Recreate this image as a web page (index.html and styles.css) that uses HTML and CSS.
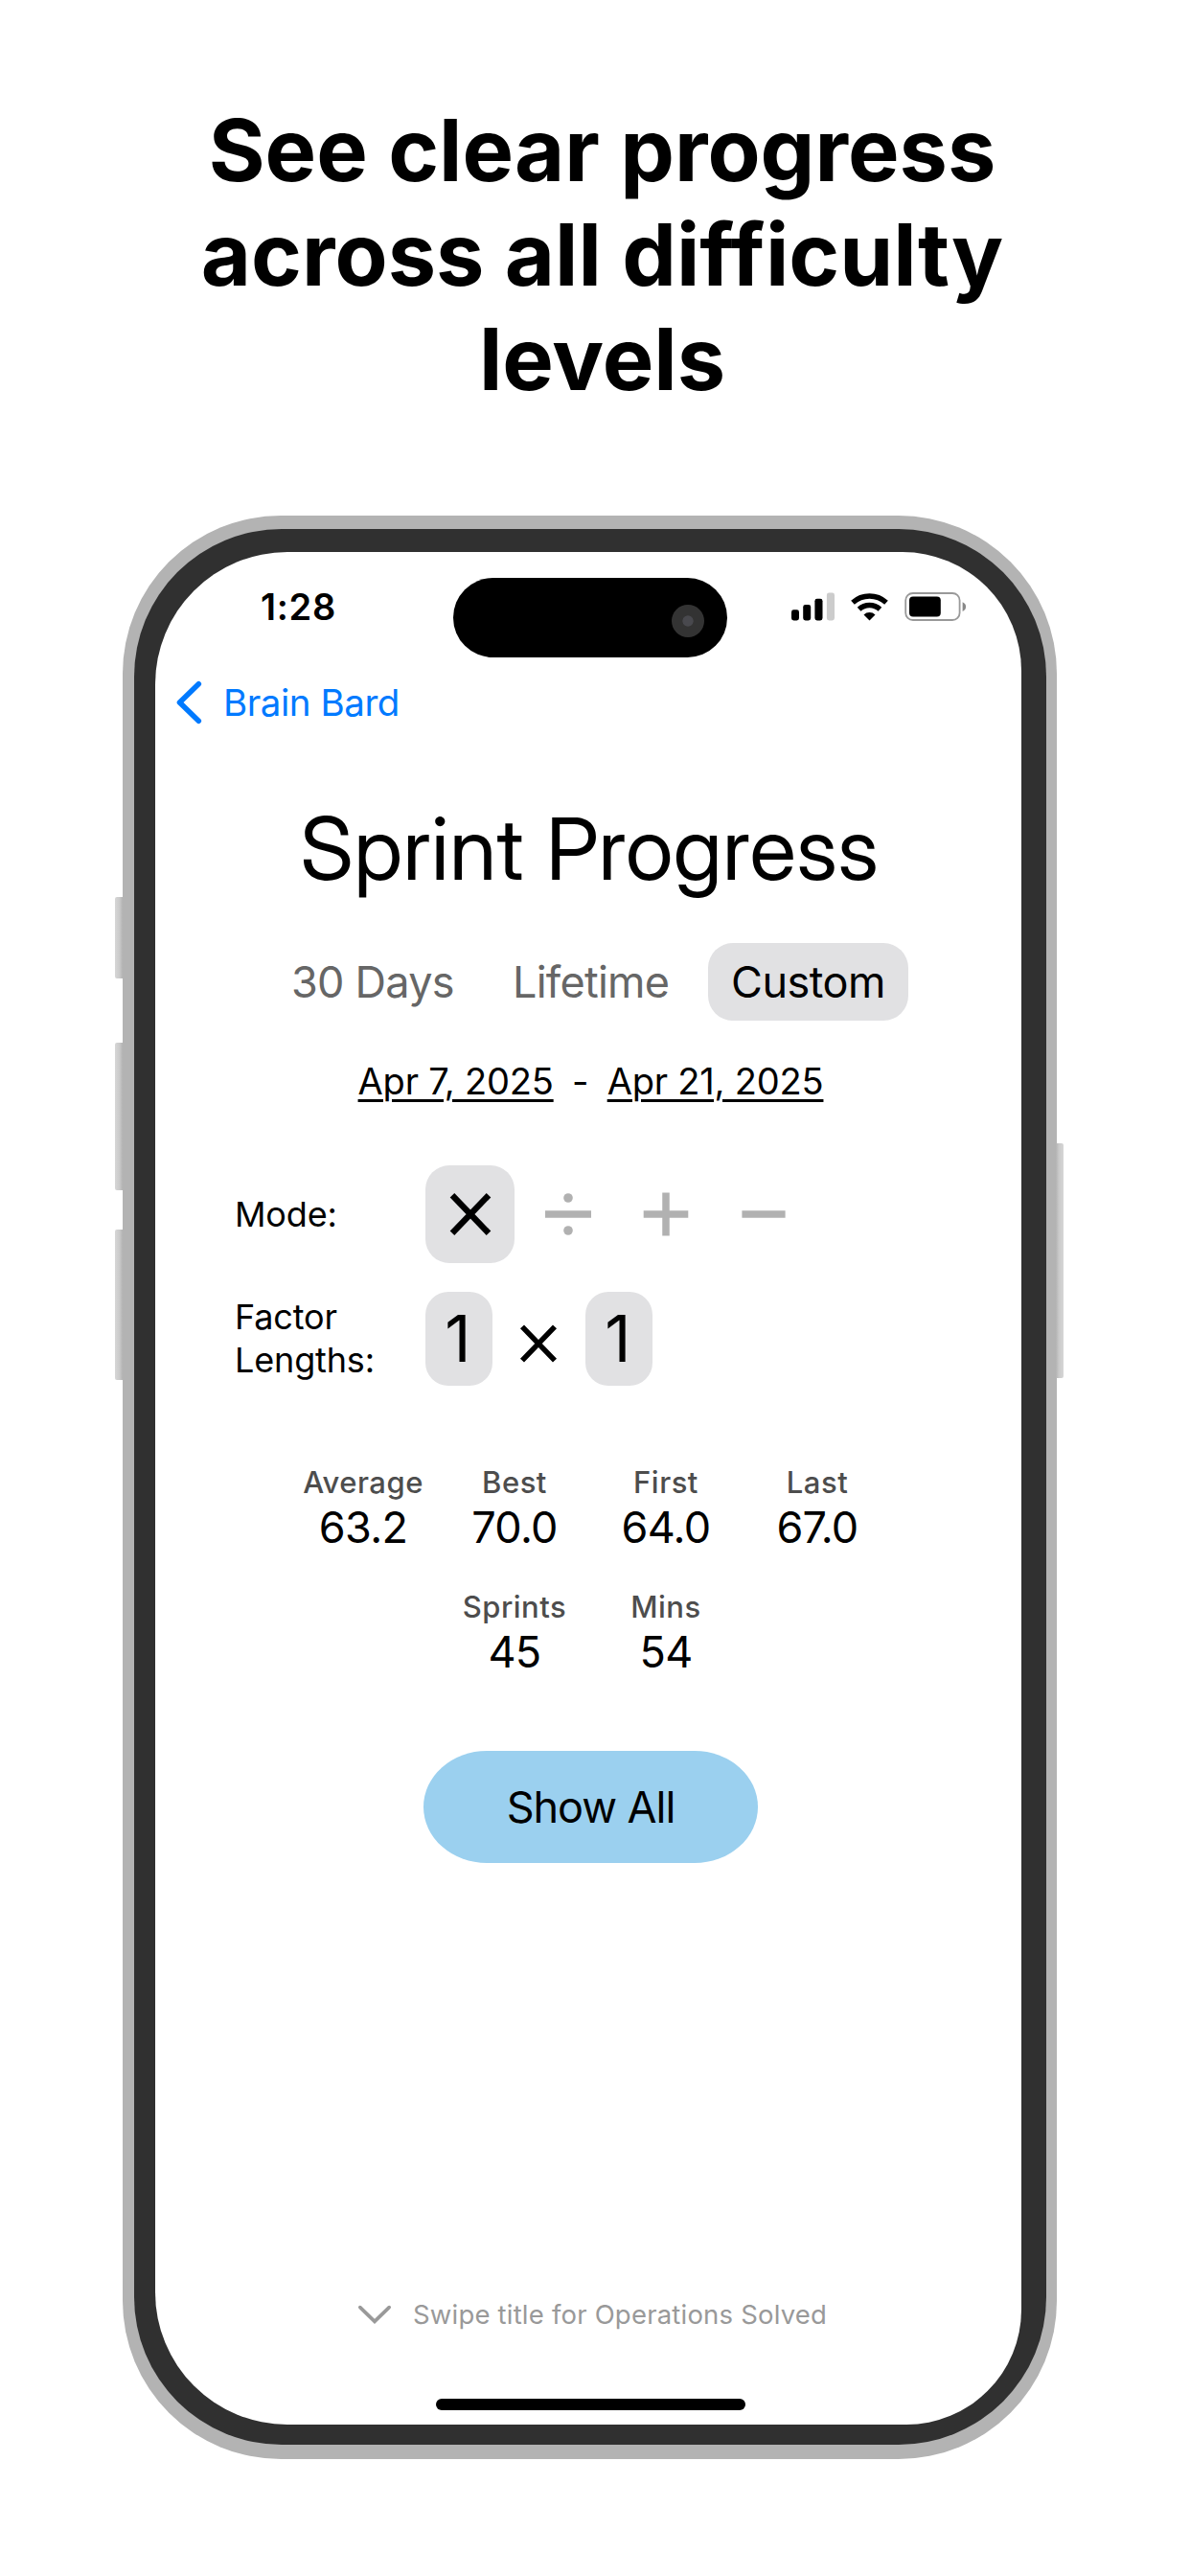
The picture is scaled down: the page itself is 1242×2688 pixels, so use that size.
FILE: index.html
```html
<!DOCTYPE html>
<html lang="en">
<head>
<meta charset="utf-8">
<title>Sprint Progress</title>
<link rel="stylesheet" href="styles.css">
</head>
<body>
<h1 class="headline">See clear progress<br>across all difficulty<br>levels</h1>
<main class="phone">
  <i class="key key-action"></i><i class="key key-up"></i><i class="key key-down"></i><i class="key key-power"></i>
  <div class="bezel">
    <div class="screen">
      <header class="status">
        <span class="time">1:28</span>
        <div class="island"><i class="camera"></i></div>
        <svg class="indicators" width="184" height="32" viewBox="825 617 184 32">
          <rect x="826" y="636.3" width="8" height="11.2" rx="2.4"/>
          <rect x="838.2" y="631" width="8" height="16.5" rx="2.4"/>
          <rect x="850.4" y="624.8" width="8.1" height="22.7" rx="2.4"/>
          <rect x="862.9" y="618.6" width="8.1" height="28.9" rx="2.4" fill="#ccc"/>
          <g fill="none" stroke="#000" stroke-width="5.4">
            <path d="M890 628.8a26 26 0 0 1 35 0"/>
            <path d="M896.6 635.8a16 16 0 0 1 21.8 0"/>
          </g>
          <path d="M907.5 647.4l-6-5.900a8.700 8.700 0 0 1 12 0z"/>
          <rect x="945.2" y="619" width="56.4" height="28" rx="7.6" fill="none" stroke="#999" stroke-width="1.8"/>
          <rect x="949" y="622.6" width="32.8" height="20.8" rx="4"/>
          <path d="M1004.6 628.2q3.500 1.600 3.500 4.900t-3.500 4.900z" fill="#888"/>
        </svg>
      </header>
      <nav class="back">
        <svg width="28" height="46" viewBox="184 710 28 46"><path d="M207.3 713.8L187.5 733l19.800 19.200" fill="none" stroke="#007aff" stroke-width="5.6" stroke-linecap="round" stroke-linejoin="round"/></svg>
        <span class="back-label">Brain Bard</span>
      </nav>
      <h2 class="title">Sprint Progress</h2>
      <div class="tabs">
        <span class="tab tab-days">30 Days</span>
        <span class="tab tab-life">Lifetime</span>
        <span class="tab tab-custom">Custom</span>
      </div>
      <div class="dates"><span class="date">Apr 7, 2025</span><span class="dash">-</span><span class="date">Apr 21, 2025</span></div>
      <div class="row mode">
        <span class="label">Mode:</span>
        <div class="ops">
          <span class="op active"><svg width="48" height="48" viewBox="-24 -24 48 48"><path d="M-19-19.8L19 19.8M19-19.8L-19 19.8" stroke="#000" stroke-width="6.4"/></svg></span>
          <span class="op"><svg width="50" height="48" viewBox="-25 -24 50 48" fill="#b1b1b1"><path d="M-24-3.8h48v7.600h-48z"/><circle cy="-17" r="4.8"/><circle cy="17" r="4.8"/></svg></span>
          <span class="op"><svg width="50" height="48" viewBox="-25 -24 50 48"><path d="M-23.3 0h46.600M0-22.500v45" stroke="#b1b1b1" stroke-width="7.5"/></svg></span>
          <span class="op"><svg width="50" height="48" viewBox="-25 -24 50 48"><path d="M-22.6 0h45.200" stroke="#b1b1b1" stroke-width="7.5"/></svg></span>
        </div>
      </div>
      <div class="row factor">
        <span class="label">Factor<br>Lengths:</span>
        <div class="lengths">
          <span class="digit">1</span>
          <svg class="times" width="42" height="42" viewBox="-21 -21 42 42"><path d="M-17-17.6L17 17.6M17-17.6L-17 17.6" stroke="#000" stroke-width="5.6"/></svg>
          <span class="digit">1</span>
        </div>
      </div>
      <section class="stats">
        <dl class="stat-row">
          <div class="stat"><dt>Average</dt><dd>63.2</dd></div>
          <div class="stat"><dt>Best</dt><dd>70.0</dd></div>
          <div class="stat"><dt>First</dt><dd>64.0</dd></div>
          <div class="stat"><dt>Last</dt><dd>67.0</dd></div>
        </dl>
        <dl class="stat-row">
          <div class="stat"><dt>Sprints</dt><dd>45</dd></div>
          <div class="stat"><dt>Mins</dt><dd>54</dd></div>
        </dl>
      </section>
      <button class="show-all">Show All</button>
      <footer class="hint">
        <svg width="36" height="22" viewBox="373 2404 36 22"><path d="M375.8 2407.6L391 2422.4l15.200-14.800" fill="none" stroke="#999" stroke-width="3.6" stroke-linecap="round"/></svg>
        <span>Swipe title for Operations Solved</span>
      </footer>
      <div class="home"></div>
    </div>
  </div>
</main>
</body>
</html>
```
FILE: styles.css
```css
* { box-sizing: border-box; }
body {
  margin: 0;
  background: #fff;
  color: #000;
  font-family: Inter, "Liberation Sans", sans-serif;
}
.headline {
  margin: 0;
  padding: 102px 0 0 15px;
  height: 538px;
  font-size: 90px;
  line-height: 109px;
  font-weight: 700;
  font-variant-ligatures: none;
  font-feature-settings: "calt" 0;
  text-align: center;
}
.phone {
  position: relative;
  width: 975px;
  height: 2028px;
  margin-left: 128px;
  padding: 14px 11px 15px 12px;
  border-radius: 165px;
  background: #b3b3b3;
}
.key {
  position: absolute;
  left: -8px;
  width: 8px;
  border-radius: 2px 0 0 2px;
  background: linear-gradient(to right, #d6d6d6, #cacaca 60%, #b3b3b3);
}
.key-action { top: 398px; height: 85px; }
.key-up { top: 550px; height: 154px; }
.key-down { top: 745px; height: 157px; }
.key-power {
  top: 655px;
  left: auto;
  right: -7px;
  height: 245px;
  transform: scaleX(-1);
}
.bezel {
  height: 100%;
  padding: 24px 26px 21px 22px;
  border-radius: 154px;
  background: #303030;
}
.screen {
  display: flex;
  flex-direction: column;
  height: 100%;
  border-radius: 138px 124px 120px 138px;
  background: #fff;
}
.status {
  display: flex;
  align-items: flex-start;
  padding: 27px 0 0 110px;
}
.time {
  width: 201px;
  margin-top: 10px;
  font-size: 38px;
  line-height: 40px;
  font-weight: 600;
  letter-spacing: 0.7px;
}
.island {
  display: flex;
  justify-content: flex-end;
  width: 286px;
  height: 83px;
  padding: 28px 24px 0 0;
  border-radius: 42px;
  background: #000;
}
.camera {
  width: 34px;
  height: 34px;
  border-radius: 50%;
  background: radial-gradient(circle, #49494e 5.2px, #333 6px);
}
.indicators { margin: 14px 0 0 66px; }
.back {
  display: flex;
  align-items: center;
  gap: 21px;
  height: 60px;
  margin: 17px 0 0 22px;
  color: #007aff;
}
.back-label {
  font-size: 38.5px;
  line-height: 46px;
  letter-spacing: -0.45px;
}
.title {
  margin: 68px 0 0 3px;
  font-family: "Inter Display", Inter, "Liberation Sans", sans-serif;
  font-size: 90px;
  line-height: 110px;
  font-weight: 400;
  letter-spacing: 0.4px;
  text-align: center;
}
.tabs {
  display: flex;
  align-items: center;
  height: 81px;
  margin: 43px 0 0 142px;
  color: #666;
  font-size: 45px;
  line-height: 81px;
  letter-spacing: -0.75px;
}
.tab { white-space: nowrap; }
.tab-days { width: 231px; }
.tab-life { width: 204px; }
.tab-custom {
  width: 209px;
  border-radius: 26px;
  background: #e1e1e3;
  color: #000;
  letter-spacing: -0.5px;
  text-align: center;
}
.dates {
  display: flex;
  justify-content: center;
  margin: 40px 0 0 5px;
  font-size: 38px;
  line-height: 46px;
}
.date {
  letter-spacing: -0.2px;
  text-decoration: underline;
  text-decoration-thickness: 2.5px;
  text-underline-offset: 4.5px;
}
.dash { width: 56px; text-align: center; }
.row {
  display: flex;
  align-items: center;
  padding-left: 83px;
}
.label {
  width: 199px;
  font-size: 36px;
  line-height: 45px;
  letter-spacing: -0.15px;
}
.mode { height: 102px; margin-top: 65px; }
.ops { display: flex; gap: 9px; height: 102px; }
.op {
  display: flex;
  align-items: center;
  justify-content: center;
  width: 93px;
  border-radius: 25px;
}
.active { background: #e1e1e3; }
.factor { margin-top: 30px; }
.lengths { display: flex; align-items: center; }
.digit {
  width: 70px;
  height: 98px;
  padding-right: 2px;
  border-radius: 24px;
  background: #e1e1e3;
  font-size: 67px;
  line-height: 98px;
  text-align: center;
}
.times { margin: 10px 28px 0 27px; }
.stats {
  display: grid;
  gap: 37px;
  margin-top: 82px;
}
.stat-row {
  display: flex;
  justify-content: center;
  margin: 0;
  padding-left: 4px;
}
.stat { width: 158px; text-align: center; }
.stat dt {
  color: #4d4d4d;
  font-size: 31px;
  line-height: 38px;
  font-weight: 500;
  letter-spacing: 0.5px;
}
.stat dd {
  margin: 1px 0 0;
  font-size: 45px;
  line-height: 54px;
  letter-spacing: -0.7px;
}
.show-all {
  width: 349px;
  height: 117px;
  margin: 76px 0 0 280px;
  padding: 0;
  border: 0;
  border-radius: 66px / 58.5px;
  background: #9bd0ef;
  color: #000;
  font: 45px/117px Inter, "Liberation Sans", sans-serif;
  letter-spacing: -1.05px;
}
.hint {
  display: flex;
  align-items: center;
  gap: 22px;
  height: 40px;
  margin: 451px 0 0 211px;
  color: #999;
  font-size: 27.5px;
  letter-spacing: 0.2px;
}
.home {
  width: 323px;
  height: 12px;
  margin: 68px 0 0 293px;
  border-radius: 6px;
  background: #000;
}
```
